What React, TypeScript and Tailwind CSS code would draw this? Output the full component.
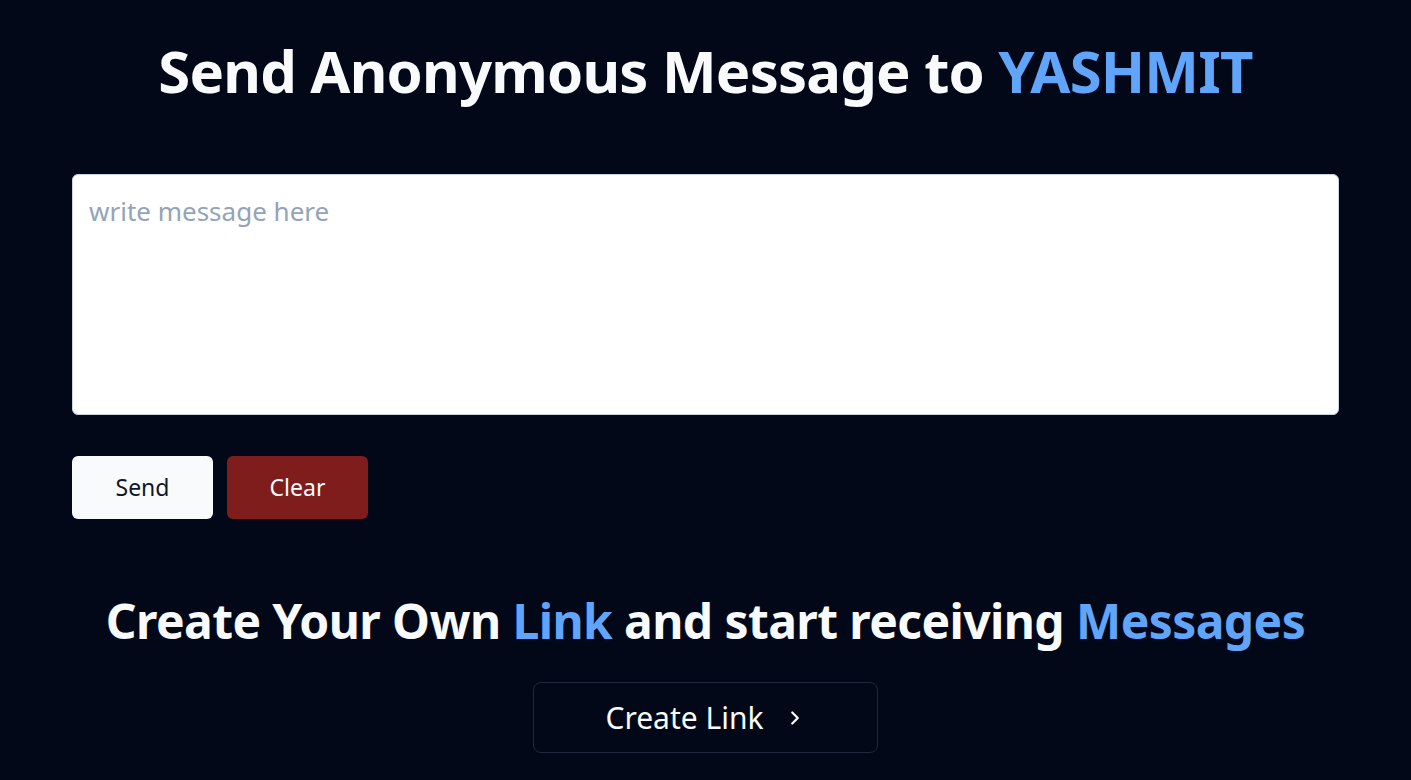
import { ChevronRight } from "lucide-react";

export default function App() {
  return (
    <div
      className="min-h-screen bg-[#020817] text-[#f8fafc]"
      style={{ fontFamily: '"Noto Sans", "Open Sans", sans-serif' }}
    >
      <div className="px-[72px] pt-[35px]">
        <h1 className="text-center text-[58px] font-bold leading-[72px] tracking-[-0.8px]">
          Send Anonymous Message to <span className="text-[#60a5fa]">YASHMIT</span>
        </h1>

        <textarea
          className="mt-[67px] block h-[241px] w-full resize-none rounded-md border border-[#cbd5e1] bg-white px-[16px] py-[18px] text-[26px] leading-[36px] text-[#020817] outline-none placeholder:text-[#94a3b8]"
          placeholder="write message here"
        />

        <div className="mt-[41px] flex gap-[14px]">
          <button className="h-[63px] w-[141px] rounded-md bg-[#f8fafc] text-[23px] text-[#0f172a]">
            Send
          </button>
          <button className="h-[63px] w-[141px] rounded-md bg-[#7f1d1d] text-[23px] text-[#f8fafc]">
            Clear
          </button>
        </div>

        <h2 className="mt-[72px] text-center text-[48px] font-bold leading-[60px] tracking-[-0.6px]">
          Create Your Own <span className="text-[#60a5fa]">Link</span> and start receiving{" "}
          <span className="text-[#60a5fa]">Messages</span>
        </h2>

        <div className="mt-[31px] flex justify-center">
          <button className="flex h-[71px] w-[345px] items-center justify-center gap-[20px] rounded-lg border border-[#1e293b] text-[30px]">
            Create Link
            <ChevronRight className="h-[22px] w-[22px]" strokeWidth={2.5} />
          </button>
        </div>
      </div>
    </div>
  );
}
